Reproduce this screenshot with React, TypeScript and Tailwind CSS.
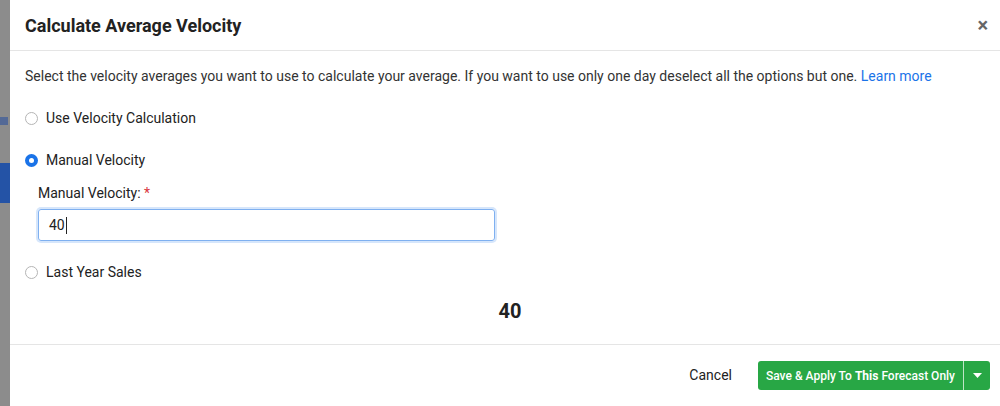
import React from 'react';

const Radio = ({ checked }: { checked?: boolean }) =>
  checked ? (
    <span className="w-[13px] h-[13px] rounded-full bg-[#1a73e8] flex items-center justify-center shrink-0">
      <span className="w-[5px] h-[5px] rounded-full bg-white" />
    </span>
  ) : (
    <span className="w-[13px] h-[13px] rounded-full border border-[#b5b5b5] bg-white shrink-0" />
  );

export default function App() {
  return (
    <div className="w-[1000px] h-[406px] flex bg-[#8c8c8c] overflow-hidden font-['Roboto',sans-serif] text-[#222]">
      <div className="w-[10px] shrink-0 flex flex-col">
        <div className="h-[117px]" />
        <div className="h-[8px] w-[8px] bg-[#3a5a9a] opacity-70" />
        <div className="h-[38px]" />
        <div className="h-[40px] bg-[#2453a6]" />
      </div>
      <div className="flex-1 bg-white flex flex-col">
        <div className="h-[51px] flex items-center justify-between pl-[15px] pr-[12px] border-b border-[#e5e5e5]">
          <h2 className="text-[18px] font-bold text-[#222]">Calculate Average Velocity</h2>
          <span className="text-[20px] leading-none font-bold text-[#666]">×</span>
        </div>
        <div className="flex-1 flex flex-col pl-[15px]">
          <p className="mt-[15px] text-[14px] leading-[20px] text-[#333]">
            Select the velocity averages you want to use to calculate your average. If you want to use only one day deselect all the options but one.{' '}
            <span className="text-[#1a73e8]">Learn more</span>
          </p>
          <label className="mt-[22px] flex items-center gap-[8px] text-[14px] leading-[20px]">
            <Radio /> Use Velocity Calculation
          </label>
          <label className="mt-[22px] flex items-center gap-[8px] text-[14px] leading-[20px]">
            <Radio checked /> Manual Velocity
          </label>
          <div className="ml-[13px] mt-[13px] text-[14px] leading-[20px]">
            Manual Velocity: <span className="text-[#d9363e]">*</span>
          </div>
          <div className="ml-[13px] mt-[6px] w-[457px] h-[32px] rounded-[3px] border border-[#7fb0f0] shadow-[0_0_0_2px_rgba(26,115,232,0.18)] flex items-center px-[10px] text-[14px]">
            40<span className="w-px h-[17px] bg-[#222] ml-px" />
          </div>
          <label className="mt-[21px] flex items-center gap-[8px] text-[14px] leading-[20px]">
            <Radio /> Last Year Sales
          </label>
          <div className="mt-[17px] text-center text-[20px] font-bold leading-[24px] pr-[5px]">40</div>
        </div>
        <div className="h-[62px] border-t border-[#e5e5e5] flex items-center justify-end pr-[10px]">
          <span className="text-[14px] text-[#222] mr-[26px]">Cancel</span>
          <div className="flex h-[29px] rounded-[3px] bg-[#28a745] text-white text-[12px] font-medium">
            <span className="px-[8px] flex items-center">
              Save &amp; Apply To <b className="font-bold mx-[3px]">This</b> Forecast Only
            </span>
            <span className="w-px bg-white/70" />
            <span className="w-[26px] flex items-center justify-center">
              <svg width="9" height="5" viewBox="0 0 9 5"><path d="M0 0h9L4.5 5z" fill="white" /></svg>
            </span>
          </div>
        </div>
      </div>
    </div>
  );
}
